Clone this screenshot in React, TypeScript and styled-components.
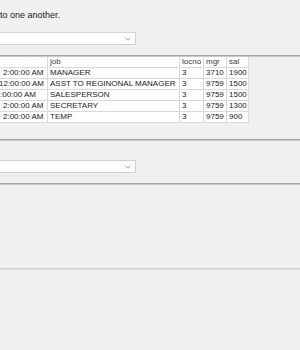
import React from 'react';
import styled, { createGlobalStyle } from 'styled-components';

type EmpRow = {
  hired: string;
  lead: number;
  job: string;
  locno: string;
  mgr: string;
  sal: string;
};

const rows: EmpRow[] = [
  { hired: '2:00:00 AM', lead: 3, job: 'MANAGER', locno: '3', mgr: '3710', sal: '1900' },
  { hired: '12:00:00 AM', lead: -1, job: 'ASST TO REGINONAL MANAGER', locno: '3', mgr: '9759', sal: '1500' },
  { hired: ':00:00 AM', lead: 0, job: 'SALESPERSON', locno: '3', mgr: '9759', sal: '1500' },
  { hired: '2:00:00 AM', lead: 3, job: 'SECRETARY', locno: '3', mgr: '9759', sal: '1300' },
  { hired: '2:00:00 AM', lead: 3, job: 'TEMP', locno: '3', mgr: '9759', sal: '900' },
];

const GlobalStyle = createGlobalStyle`
  html, body {
    margin: 0;
    padding: 0;
    background: #f0f0f0;
    overflow: hidden;
  }
  body {
    font-family: "Liberation Sans", Arial, sans-serif;
    color: #1a1a1a;
  }
`;

const Page = styled.div`
  width: 300px;
  height: 350px;
  display: flex;
  flex-direction: column;
`;

const Intro = styled.p`
  margin: 10px 0 0;
  font-size: 9px;
  line-height: 11px;
`;

const SelectBox = styled.div<{ $focus?: boolean }>`
  width: 136px;
  height: 13px;
  box-sizing: border-box;
  margin-top: ${(p) => (p.$focus ? '19px' : '11px')};
  background: #ffffff;
  border: 1px solid ${(p) => (p.$focus ? '#c3d3e4' : '#d2d2d2')};
  border-left: none;
  display: flex;
  align-items: center;
  justify-content: flex-end;
  padding-right: 4px;
`;

const Divider = styled.hr<{ $gap: number; $light?: boolean }>`
  margin: ${(p) => p.$gap}px 0 0;
  height: 0;
  border: none;
  border-top: 1px solid ${(p) => (p.$light ? '#cfcfcf' : '#a4a4a4')};
  border-bottom: 1px solid ${(p) => (p.$light ? '#dcdcdc' : '#c9c9c9')};
`;

const Grid = styled.div`
  width: 249px;
  display: grid;
  grid-template-columns: 48px 132px 24px 23px 22px;
  grid-auto-rows: 11px;
  background: #ffffff;
  font-size: 8px;
  line-height: 10px;
`;

const Cell = styled.div<{ $head?: boolean }>`
  box-sizing: border-box;
  border-right: 1px solid #dadada;
  border-bottom: 1px solid #dadada;
  padding-left: 2px;
  white-space: nowrap;
  overflow: hidden;
  color: ${(p) => (p.$head ? '#3a3a3a' : '#1a1a1a')};
`;

const ClipCell = styled(Cell)`
  padding-left: 0;
`;

const Chevron = () => (
  <svg width="6" height="4" viewBox="0 0 6 4">
    <polyline points="0.5,0.8 3,3.2 5.5,0.8" fill="none" stroke="#9a9a9a" strokeWidth="1" />
  </svg>
);

const App = () => {
  return (
    <Page>
      <GlobalStyle />
      <Intro>to one another.</Intro>
      <SelectBox>
        <Chevron />
      </SelectBox>
      <Divider $gap={10} />
      <Grid>
        <ClipCell $head />
        <Cell $head>job</Cell>
        <Cell $head>locno</Cell>
        <Cell $head>mgr</Cell>
        <Cell $head>sal</Cell>
        {rows.map((r, i) => (
          <React.Fragment key={i}>
            <ClipCell style={{ textIndent: r.lead }}>{r.hired}</ClipCell>
            <Cell>{r.job}</Cell>
            <Cell>{r.locno}</Cell>
            <Cell>{r.mgr}</Cell>
            <Cell>{r.sal}</Cell>
          </React.Fragment>
        ))}
      </Grid>
      <Divider $gap={16} />
      <SelectBox $focus>
        <Chevron />
      </SelectBox>
      <Divider $gap={10} />
      <Divider $gap={83} $light />
    </Page>
  );
};

export default App;
